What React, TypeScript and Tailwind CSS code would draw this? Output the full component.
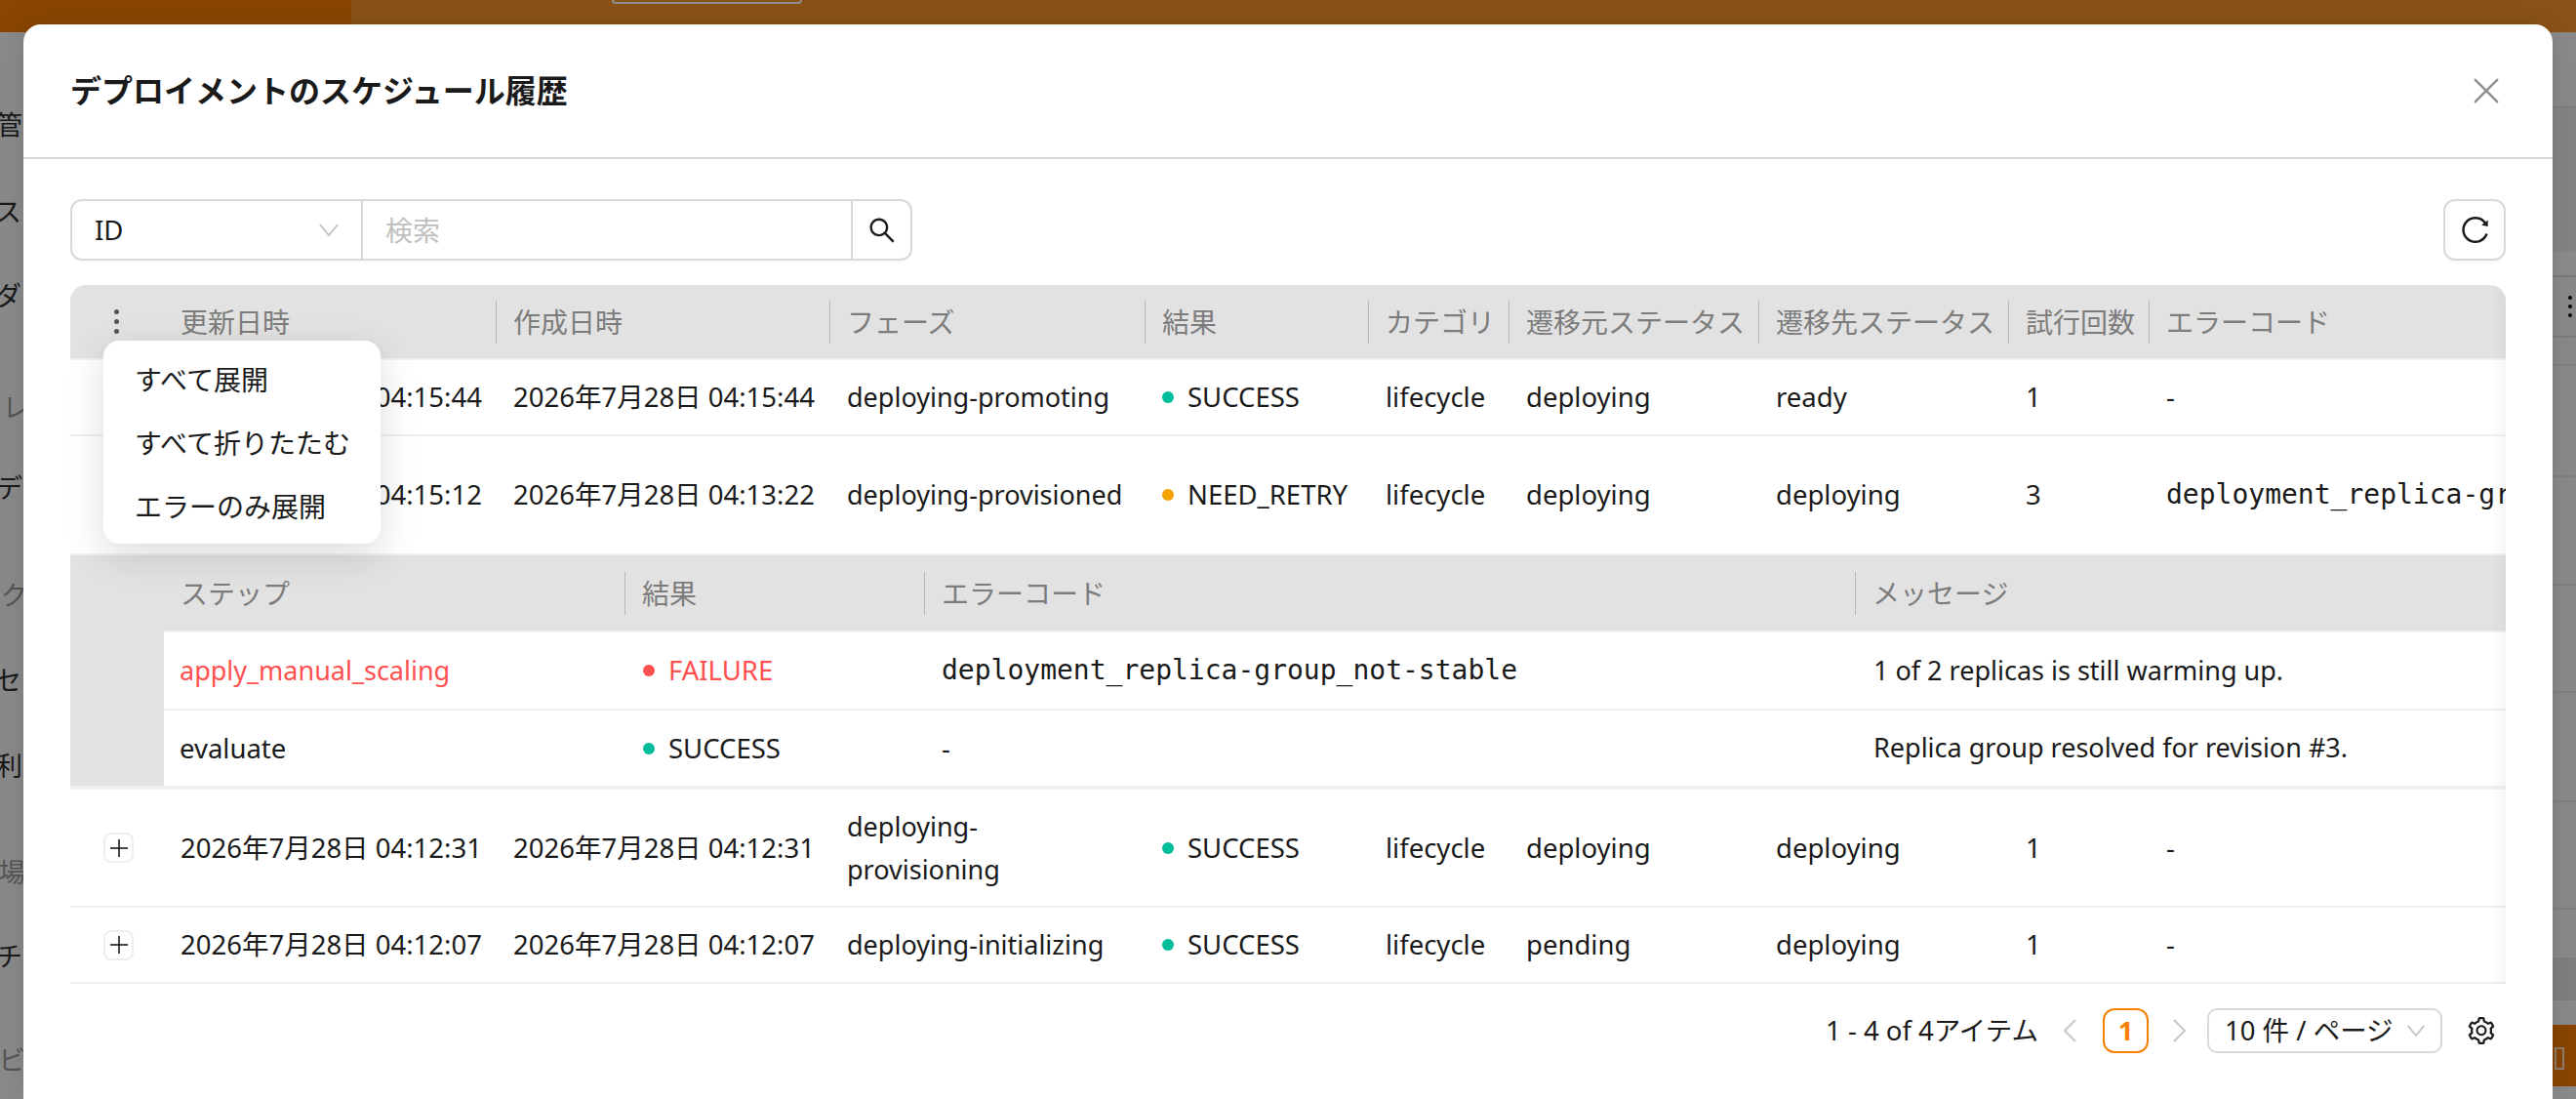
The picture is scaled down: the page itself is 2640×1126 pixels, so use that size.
import { AiOutlineReload, AiOutlineSearch, AiOutlineSetting } from "react-icons/ai";

const sideItems = [
  { text: "管", cls: "mt-[75px] pr-[37px] text-[#1a1a1a]" },
  { text: "ス", cls: "mt-[49px] pr-[38px] text-[#1a1a1a]" },
  { text: "ダ", cls: "mt-[46px] pr-[38px] text-[#1a1a1a]" },
  { text: "レ", cls: "mt-[75px] pr-[30px] text-[#555555]" },
  { text: "デ", cls: "mt-[42px] pr-[37px] text-[#1a1a1a]" },
  { text: "ク", cls: "mt-[70px] pr-[32px] text-[#555555]" },
  { text: "セ", cls: "mt-[47px] pr-[38px] text-[#1a1a1a]" },
  { text: "利", cls: "mt-[48px] pr-[37px] text-[#1a1a1a]" },
  { text: "場", cls: "mt-[69px] pr-[34px] text-[#555555]" },
  { text: "チ", cls: "mt-[46px] pr-[37px] text-[#1a1a1a]" },
  { text: "ビ", cls: "mt-[66px] pr-[34px] text-[#555555]" },
];

const rows = [
  { updated: "2026年7月28日 04:15:44", created: "2026年7月28日 04:15:44", phase: "deploying-promoting", result: "SUCCESS", from: "deploying", to: "ready", tries: "1", code: "-" },
  { updated: "2026年7月28日 04:15:12", created: "2026年7月28日 04:13:22", phase: "deploying-provisioned", result: "NEED_RETRY", from: "deploying", to: "deploying", tries: "3", code: "deployment_replica-group_not-stable" },
  { updated: "2026年7月28日 04:12:31", created: "2026年7月28日 04:12:31", phase: "deploying-provisioning", result: "SUCCESS", from: "deploying", to: "deploying", tries: "1", code: "-" },
  { updated: "2026年7月28日 04:12:07", created: "2026年7月28日 04:12:07", phase: "deploying-initializing", result: "SUCCESS", from: "pending", to: "deploying", tries: "1", code: "-" },
];

const headers = ["更新日時", "作成日時", "フェーズ", "結果", "カテゴリ", "遷移元ステータス", "遷移先ステータス", "試行回数", "エラーコード"];
const subHeaders = ["ステップ", "結果", "エラーコード", "メッセージ"];

const mono = "[font-family:'DejaVu_Sans_Mono',monospace] text-[28px]";

function Chevron({ className }: { className: string }) {
  return (
    <svg viewBox="0 0 24 14" fill="none" stroke="currentColor" strokeWidth="2" className={className}>
      <path d="M2 1l10 12L22 1" />
    </svg>
  );
}

function Dot({ color }: { color: string }) {
  return <span className={`inline-block w-[12px] h-[12px] rounded-full mr-[14px] shrink-0 ${color}`} />;
}

function Status({ value }: { value: string }) {
  const color = value === "SUCCESS" ? "bg-[#00bd9b]" : value === "FAILURE" ? "bg-[#ff5050]" : "bg-[#f5a300]";
  return (
    <span className="flex items-center whitespace-nowrap">
      <Dot color={color} />
      {value}
    </span>
  );
}

function HeaderCell({ label, last }: { label: string; last?: boolean }) {
  return (
    <th className="p-0 pl-[17px] bg-[#e2e2e2] border-b-2 border-[#f0f0f0] font-normal text-left text-[28px] text-[#7c7c7c]">
      <div className={`flex items-center h-[44px] mr-[-1px] whitespace-nowrap ${last ? "" : "border-r-2 border-[#b8b8b8]"}`}>{label}</div>
    </th>
  );
}

function ExpandButton({ open }: { open?: boolean }) {
  return (
    <div className="w-[31px] h-[31px] ml-[34px] flex items-center justify-center rounded-[8px] border-2 border-[#eeeeee] text-[#1a1a1a]">
      <svg viewBox="0 0 18 18" className="w-[18px] h-[18px]" stroke="currentColor" strokeWidth="1.6">
        <path d="M0 9h18" />
        {!open && <path d="M9 0v18" />}
      </svg>
    </div>
  );
}

function SubTable() {
  return (
    <div className="flex">
      <div className="w-[96px] shrink-0 bg-[#e2e2e2]" />
      <table className="flex-1 table-fixed border-separate border-spacing-0">
        <colgroup>
          <col className="w-[473px]" />
          <col className="w-[307px]" />
          <col className="w-[954px]" />
          <col />
        </colgroup>
        <thead>
          <tr className="h-[79px]">
            {subHeaders.map((h, i) => (
              <HeaderCell key={h} label={h} last={i === 3} />
            ))}
          </tr>
        </thead>
        <tbody>
          <tr className="h-[80px]">
            <td className="pl-[16px] border-b-2 border-[#f0f0f0] text-[27px] text-[#ff5050]">apply_manual_scaling</td>
            <td className="pl-[18px] border-b-2 border-[#f0f0f0] text-[#ff5050]">
              <Status value="FAILURE" />
            </td>
            <td className={`pl-[17px] border-b-2 border-[#f0f0f0] whitespace-nowrap ${mono}`}>deployment_replica-group_not-stable</td>
            <td className="pl-[18px] border-b-2 border-[#f0f0f0] text-[27px] whitespace-nowrap">1 of 2 replicas is still warming up.</td>
          </tr>
          <tr className="h-[77px]">
            <td className="pl-[16px]">evaluate</td>
            <td className="pl-[18px]">
              <Status value="SUCCESS" />
            </td>
            <td className="pl-[17px]">-</td>
            <td className="pl-[18px] text-[27px] whitespace-nowrap">Replica group resolved for revision #3.</td>
          </tr>
        </tbody>
      </table>
    </div>
  );
}

export default function App() {
  return (
    <div className="relative h-[1126px] w-[2640px] overflow-hidden bg-[#8a8a8a] [font-family:'Noto_Sans','Noto_Sans_CJK_JP',sans-serif] text-[27.5px] text-[#1a1a1a]">
      {/* dimmed page behind the modal */}
      <div className="flex h-[33px]">
        <div className="w-[360px] bg-[#8a4500]" />
        <div className="flex-1 bg-[#8a5216] pl-[267px]">
          <div className="w-[195px] h-[4px] rounded-b-[6px] border-b-2 border-x-2 border-[#8f8f8f]" />
        </div>
      </div>
      <div className="flex justify-between">
        <div className="w-[60px] flex flex-col">
          {sideItems.map((item) => (
            <div key={item.text} className={`h-[40px] flex items-center justify-end ${item.cls}`}>
              {item.text}
            </div>
          ))}
        </div>
        <div className="w-[24px] flex flex-col">
          <div className="h-[78px] border-b-2 border-[#7c7c7c]" />
          <div className="h-[147px] bg-[#858585]" />
          <div className="h-[26px] bg-[#8c8c8c] border-b-2 border-[#7c7c7c]" />
          <div className="h-[62px] border-b-2 border-[#7c7c7c] flex flex-col items-end justify-center gap-[5px] pr-[4px]">
            <span className="w-[4px] h-[4px] rounded-full bg-black" />
            <span className="w-[4px] h-[4px] rounded-full bg-black" />
            <span className="w-[4px] h-[4px] rounded-full bg-black" />
          </div>
          <div className="h-[29px] border-b-2 border-[#808080]" />
          <div className="h-[114px] border-b-2 border-[#808080]" />
          <div className="h-[111px] border-b-2 border-[#808080]" />
          <div className="h-[110px] border-b-2 border-[#808080]" />
          <div className="h-[112px] border-b-2 border-[#808080]" />
          <div className="h-[110px] border-b-2 border-[#808080]" />
          <div className="h-[49px]" />
          <div className="h-[44px] bg-[#7f7f7f]" />
          <div className="h-[25px]" />
          <div className="h-[63px] bg-[#8a4500] pl-[2px] pt-[23px]">
            <div className="w-[10px] h-[23px] border-2 border-[#8f7d6c]" />
          </div>
        </div>
      </div>

      {/* modal */}
      <div className="absolute left-[24px] right-[24px] top-[25px] bottom-0 flex flex-col rounded-t-[18px] bg-white shadow-[0_0_32px_rgba(0,0,0,0.12)]">
        <div className="h-[138px] shrink-0 flex items-center justify-between pl-[48px] pr-[55px] border-b-2 border-[#d9d9d9]">
          <h1 className="text-[32px] font-bold mt-[-1px]">デプロイメントのスケジュール履歴</h1>
          <svg viewBox="0 0 24 24" fill="none" stroke="#8f8f8f" strokeWidth="2.2" className="w-[26px] h-[26px]">
            <path d="M1 1l22 22M23 1L1 23" />
          </svg>
        </div>

        <div className="flex flex-col flex-1 px-[48px] pt-[41px]">
          <div className="flex items-center justify-between h-[63px] shrink-0">
            <div className="flex h-[63px] w-[863px] rounded-[12px] border-2 border-[#d9d9d9] shadow-[0_2px_0_rgba(0,0,0,0.02)]">
              <div className="w-[298px] flex items-center justify-between pl-[23px] pr-[22px] border-r-2 border-[#d9d9d9]">
                <span>ID</span>
                <Chevron className="w-[22px] h-[13px] text-[#bfbfbf]" />
              </div>
              <div className="flex-1 flex items-center pl-[23px] text-[28px] text-[#bfbfbf]">検索</div>
              <div className="w-[61px] flex items-center justify-center border-l-2 border-[#d9d9d9]">
                <AiOutlineSearch className="w-[32px] h-[32px]" />
              </div>
            </div>
            <div className="w-[64px] h-[63px] flex items-center justify-center rounded-[12px] border-2 border-[#d9d9d9] shadow-[0_3px_0_rgba(0,0,0,0.02)]">
              <AiOutlineReload className="w-[33px] h-[33px]" />
            </div>
          </div>

          <div className="relative mt-[25px] rounded-t-[16px] overflow-hidden">
            <table className="w-full table-fixed border-separate border-spacing-0">
              <colgroup>
                <col className="w-[96px]" />
                <col className="w-[341px]" />
                <col className="w-[342px]" />
                <col className="w-[323px]" />
                <col className="w-[229px]" />
                <col className="w-[144px]" />
                <col className="w-[256px]" />
                <col className="w-[256px]" />
                <col className="w-[144px]" />
                <col />
              </colgroup>
              <thead>
                <tr className="h-[77px]">
                  <th className="p-0 bg-[#e2e2e2] border-b-2 border-[#f0f0f0]">
                    <div className="flex flex-col items-center gap-[5px] ml-[-1px]">
                      <span className="w-[5px] h-[5px] rounded-full bg-[#555555]" />
                      <span className="w-[5px] h-[5px] rounded-full bg-[#555555]" />
                      <span className="w-[5px] h-[5px] rounded-full bg-[#555555]" />
                    </div>
                  </th>
                  {headers.map((h, i) => (
                    <HeaderCell key={h} label={h} last={i === headers.length - 1} />
                  ))}
                </tr>
              </thead>
              <tbody>
                {rows.map((row, i) => {
                  const open = i === 1;
                  const cell = "pl-[17px] border-b-2 border-[#f0f0f0]";
                  return [
                    <tr key={row.created} className={i === 0 || i === 3 ? "h-[78px]" : i === 1 ? "h-[122px]" : "h-[121px]"}>
                      <td className="border-b-2 border-[#f0f0f0]">
                        <ExpandButton open={i < 2} />
                      </td>
                      <td className={`${cell} pl-[16px] whitespace-nowrap`}>{row.updated}</td>
                      <td className={`${cell} whitespace-nowrap`}>{row.created}</td>
                      <td className={`${cell} pr-[17px] text-[27px] leading-[44px]`}>{row.phase}</td>
                      <td className={cell}>
                        <Status value={row.result} />
                      </td>
                      <td className={cell}>lifecycle</td>
                      <td className={cell}>{row.from}</td>
                      <td className={cell}>{row.to}</td>
                      <td className={cell}>{row.tries}</td>
                      <td className={`${cell} whitespace-nowrap ${row.code === "-" ? "" : mono}`}>{row.code}</td>
                    </tr>,
                    open && (
                      <tr key="expanded">
                        <td colSpan={10} className="p-0 border-b-4 border-[#f0f0f0]">
                          <SubTable />
                        </td>
                      </tr>
                    ),
                  ];
                })}
              </tbody>
            </table>
            <div className="absolute top-0 bottom-0 right-0 w-[16px] bg-gradient-to-l from-[rgba(0,0,0,0.035)] to-transparent" />
          </div>

          <div className="flex items-center justify-end h-[46px] mt-[25px] shrink-0">
            <span className="whitespace-nowrap">1 - 4 of 4アイテム</span>
            <svg viewBox="0 0 14 24" fill="none" stroke="#c8c8c8" strokeWidth="2" className="w-[14px] h-[24px] ml-[25px]">
              <path d="M13 1L2 12l11 11" />
            </svg>
            <div className="w-[47px] h-[46px] ml-[27px] flex items-center justify-center rounded-[12px] border-2 border-[#f97f00] text-[#f97f00] font-bold">1</div>
            <svg viewBox="0 0 14 24" fill="none" stroke="#c8c8c8" strokeWidth="2" className="w-[14px] h-[24px] ml-[25px]">
              <path d="M1 1l11 11L1 23" />
            </svg>
            <div className="w-[241px] h-[46px] ml-[21px] flex items-center justify-between pl-[16px] pr-[15px] rounded-[10px] border-2 border-[#d9d9d9]">
              <span className="whitespace-nowrap">10 件 / ページ</span>
              <Chevron className="w-[20px] h-[12px] text-[#bfbfbf]" />
            </div>
            <AiOutlineSetting className="w-[32px] h-[32px] ml-[24px] mr-[9px]" />
          </div>
        </div>
      </div>

      {/* bulk expand menu */}
      <div className="absolute left-[106px] top-[349px] w-[284px] h-[208px] py-[7px] rounded-[16px] bg-white text-[28px] shadow-[0_12px_40px_rgba(0,0,0,0.14)]">
        <div className="h-[65px] flex items-center pl-[32px]">すべて展開</div>
        <div className="h-[65px] flex items-center pl-[32px]">すべて折りたたむ</div>
        <div className="h-[65px] flex items-center pl-[32px]">エラーのみ展開</div>
      </div>
    </div>
  );
}
